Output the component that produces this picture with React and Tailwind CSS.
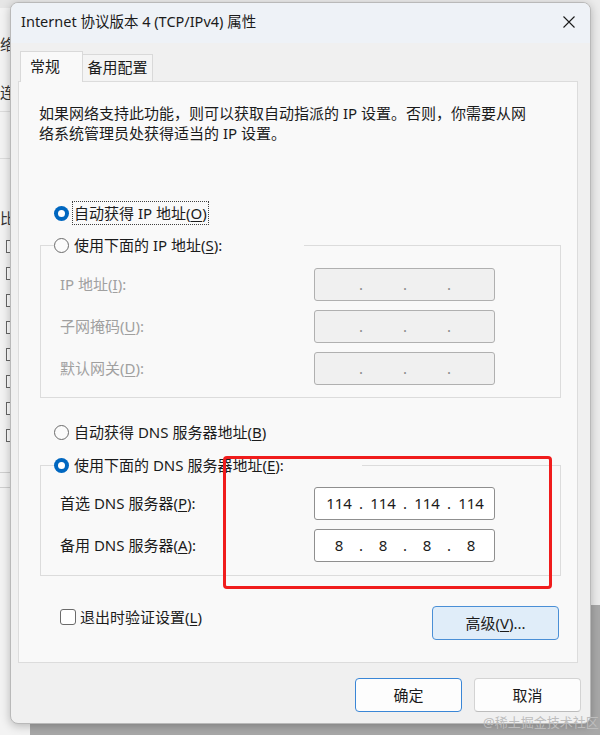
import React from "react";

const FONT = "font-['Noto_Sans','Noto_Sans_CJK_SC',sans-serif]";

function RadioDot({ checked }) {
  if (checked) {
    return (
      <span className="flex h-[15px] w-[15px] shrink-0 items-center justify-center rounded-full bg-[#0067c0]">
        <span className="h-[7px] w-[7px] rounded-full bg-white" />
      </span>
    );
  }
  return <span className="h-[15px] w-[15px] shrink-0 rounded-full border border-[#6b6b6b] bg-[#fbfbfb]" />;
}

function Radio({ checked, focus, children }) {
  return (
    <div className="flex h-[24px] items-center">
      <RadioDot checked={checked} />
      <span
        className={`ml-[3px] whitespace-nowrap leading-[22px] ${
          focus ? "border border-dotted border-[#404040] px-[1px]" : "px-[2px]"
        }`}
      >
        {children}
      </span>
    </div>
  );
}

function IpInput({ values, disabled }) {
  const parts = values || ["", "", "", ""];
  return (
    <div
      className={`flex h-[33px] w-[181px] items-center rounded-[3px] border pl-[6px] ${
        disabled ? "border-[#b0b0b0] bg-[#f0f0f0]" : "border-[#8f8f8f] bg-white"
      }`}
    >
      {parts.map((p, i) => (
        <React.Fragment key={i}>
          <span className="w-[36px] text-center text-[15px] text-[#1b1b1b]">{p}</span>
          {i < 3 && (
            <span className={`w-[8px] text-center text-[15px] ${disabled ? "text-[#8a8a8a]" : "text-[#1b1b1b]"}`}>.</span>
          )}
        </React.Fragment>
      ))}
    </div>
  );
}

function FieldRow({ label, values, disabled }) {
  return (
    <div className="flex h-[33px] items-center">
      <span className={`w-[254px] whitespace-nowrap ${disabled ? "text-[#a0a0a0]" : "text-[#1b1b1b]"}`}>{label}</span>
      <IpInput values={values} disabled={disabled} />
    </div>
  );
}

function Background() {
  const boxes = [248, 275, 302, 329, 355, 382, 408, 435];
  return (
    <div className="absolute inset-0 flex">
      <div className="relative h-full w-[30px] bg-[#f3f3f3] text-[15px] text-[#333]">
        <div className="h-[8px] bg-[#e6e6e6]" />
        <div className="mt-[27px] leading-[18px]">络</div>
        <div className="mt-[30px] leading-[18px]">连</div>
        <div className="mt-[10px] h-px bg-[#dcdcdc]" />
        <div className="mt-[46px] h-px bg-[#dcdcdc]" />
        <div className="mt-[50px] leading-[18px]">比</div>
        <div className="mt-[13px] flex flex-col gap-[14px] pl-[6px]">
          {boxes.map((b) => (
            <span key={b} className="h-[13px] w-[12px] border border-[#666] bg-white" />
          ))}
        </div>
        <div className="mt-[30px] h-px bg-[#cfcfcf]" />
        <div className="mt-[14px] h-px bg-[#cfcfcf]" />
      </div>
      <div className="flex-1" />
    </div>
  );
}

export default function App() {
  return (
    <div className={`relative h-[735px] w-[600px] overflow-hidden bg-[#a8a8a8] ${FONT}`}>
      <div className="absolute inset-x-0 top-0 h-[605px] bg-[#ececec]" />
      <Background />

      {/* dialog window */}
      <div className="absolute left-[10px] top-[2px] flex h-[722px] w-[581px] flex-col overflow-hidden rounded-[8px] border border-[#b9b9b9] bg-[#f0f0f0] text-[15px] text-[#1b1b1b] shadow-[0_2px_10px_rgba(0,0,0,0.25)]">
        <div className="flex h-[40px] shrink-0 items-start justify-between bg-[#eef2f7] pl-[10px] pr-[15px] pt-[7px]">
          <span className="whitespace-nowrap text-[14.5px] leading-[22px] text-[#1b1b1b]">
            Internet 协议版本 4 (TCP/IPv4) 属性
          </span>
          <svg width="12" height="12" viewBox="0 0 12 12" className="mt-[6px]">
            <path d="M0.5 0.5 L11.5 11.5 M11.5 0.5 L0.5 11.5" stroke="#1b1b1b" strokeWidth="1.1" />
          </svg>
        </div>

        {/* tabs */}
        <div className="ml-[9px] mt-[8px] flex items-end">
          <div className="relative z-10 -mb-px h-[31px] w-[63px] border border-b-0 border-[#d9d9d9] bg-[#f9f9f9] pl-[9px] pt-[4px] leading-[20px]">
            常规
          </div>
          <div className="flex h-[27px] w-[70px] items-center justify-center border border-b-0 border-l-0 border-[#d9d9d9] bg-[#f4f4f4] pb-[1px]">
            备用配置
          </div>
        </div>

        {/* tab panel */}
        <div className="ml-[7px] mr-[12px] flex h-[582px] flex-col border border-[#dcdcdc] bg-[#f9f9f9]">
          <div className="ml-[20px] mt-[21px] leading-[20px]">
            <div className="whitespace-nowrap">如果网络支持此功能，则可以获取自动指派的 IP 设置。否则，你需要从网</div>
            <div className="whitespace-nowrap">络系统管理员处获得适当的 IP 设置。</div>
          </div>

          <div className="ml-[35px] mt-[58px]">
            <Radio checked focus>
              自动获得 IP 地址(<u className="underline-offset-2">O</u>)
            </Radio>
          </div>

          <fieldset className="ml-[21px] mt-[8px] w-[521px] border border-[#dcdcdc] pb-[12px] pl-[19px]">
            <legend className="-ml-[6px] w-[250px]">
              <Radio>
                使用下面的 IP 地址(<u className="underline-offset-2">S</u>):
              </Radio>
            </legend>
            <div className="mt-[11px] flex flex-col gap-[9px]">
              <FieldRow disabled label={<>IP 地址(<u className="underline-offset-2">I</u>):</>} />
              <FieldRow disabled label={<>子网掩码(<u className="underline-offset-2">U</u>):</>} />
              <FieldRow disabled label={<>默认网关(<u className="underline-offset-2">D</u>):</>} />
            </div>
          </fieldset>

          <div className="ml-[35px] mt-[22px]">
            <Radio>
              自动获得 DNS 服务器地址(<u className="underline-offset-2">B</u>)
            </Radio>
          </div>

          <fieldset className="ml-[21px] mt-[9px] w-[521px] border border-[#dcdcdc] pb-[13px] pl-[19px]">
            <legend className="-ml-[6px] w-[308px]">
              <Radio checked>
                使用下面的 DNS 服务器地址(<u className="underline-offset-2">E</u>):
              </Radio>
            </legend>
            <div className="mt-[10px] flex flex-col gap-[9px]">
              <FieldRow
                label={<>首选 DNS 服务器(<u className="underline-offset-2">P</u>):</>}
                values={["114", "114", "114", "114"]}
              />
              <FieldRow
                label={<>备用 DNS 服务器(<u className="underline-offset-2">A</u>):</>}
                values={["8", "8", "8", "8"]}
              />
            </div>
          </fieldset>

          <div className="ml-[41px] mr-[18px] mt-[29px] flex items-start justify-between">
            <label className="flex h-[24px] items-center">
              <span className="h-[16px] w-[16px] rounded-[3px] border border-[#6b6b6b] bg-white" />
              <span className="ml-[4px] whitespace-nowrap">
                退出时验证设置(<u className="underline-offset-2">L</u>)
              </span>
            </label>
            <button className="mt-[1px] flex h-[34px] w-[127px] items-center justify-center rounded-[4px] border border-[#4a8fd6] bg-[#e0edf9]">
              高级(<u className="underline-offset-2">V</u>)...
            </button>
          </div>
        </div>

        <div className="mr-[9px] mt-[15px] flex justify-end gap-[12px]">
          <button className="flex h-[34px] w-[107px] items-center justify-center rounded-[4px] border border-[#3a86d6] bg-[#fdfdfd]">
            确定
          </button>
          <button className="flex h-[34px] w-[107px] items-center justify-center rounded-[4px] border border-[#d3d3d3] border-b-[#bcbcbc] bg-[#fdfdfd]">
            取消
          </button>
        </div>
      </div>

      {/* annotation */}
      <div className="absolute left-[223px] top-[456px] h-[133px] w-[329px] rounded-[4px] border-[3px] border-[#f01c1c]" />

      <div className="absolute left-[483px] top-[713px] whitespace-nowrap text-[13px] leading-[18px] text-[#bdbdbd]">
        @稀土掘金技术社区
      </div>
    </div>
  );
}
